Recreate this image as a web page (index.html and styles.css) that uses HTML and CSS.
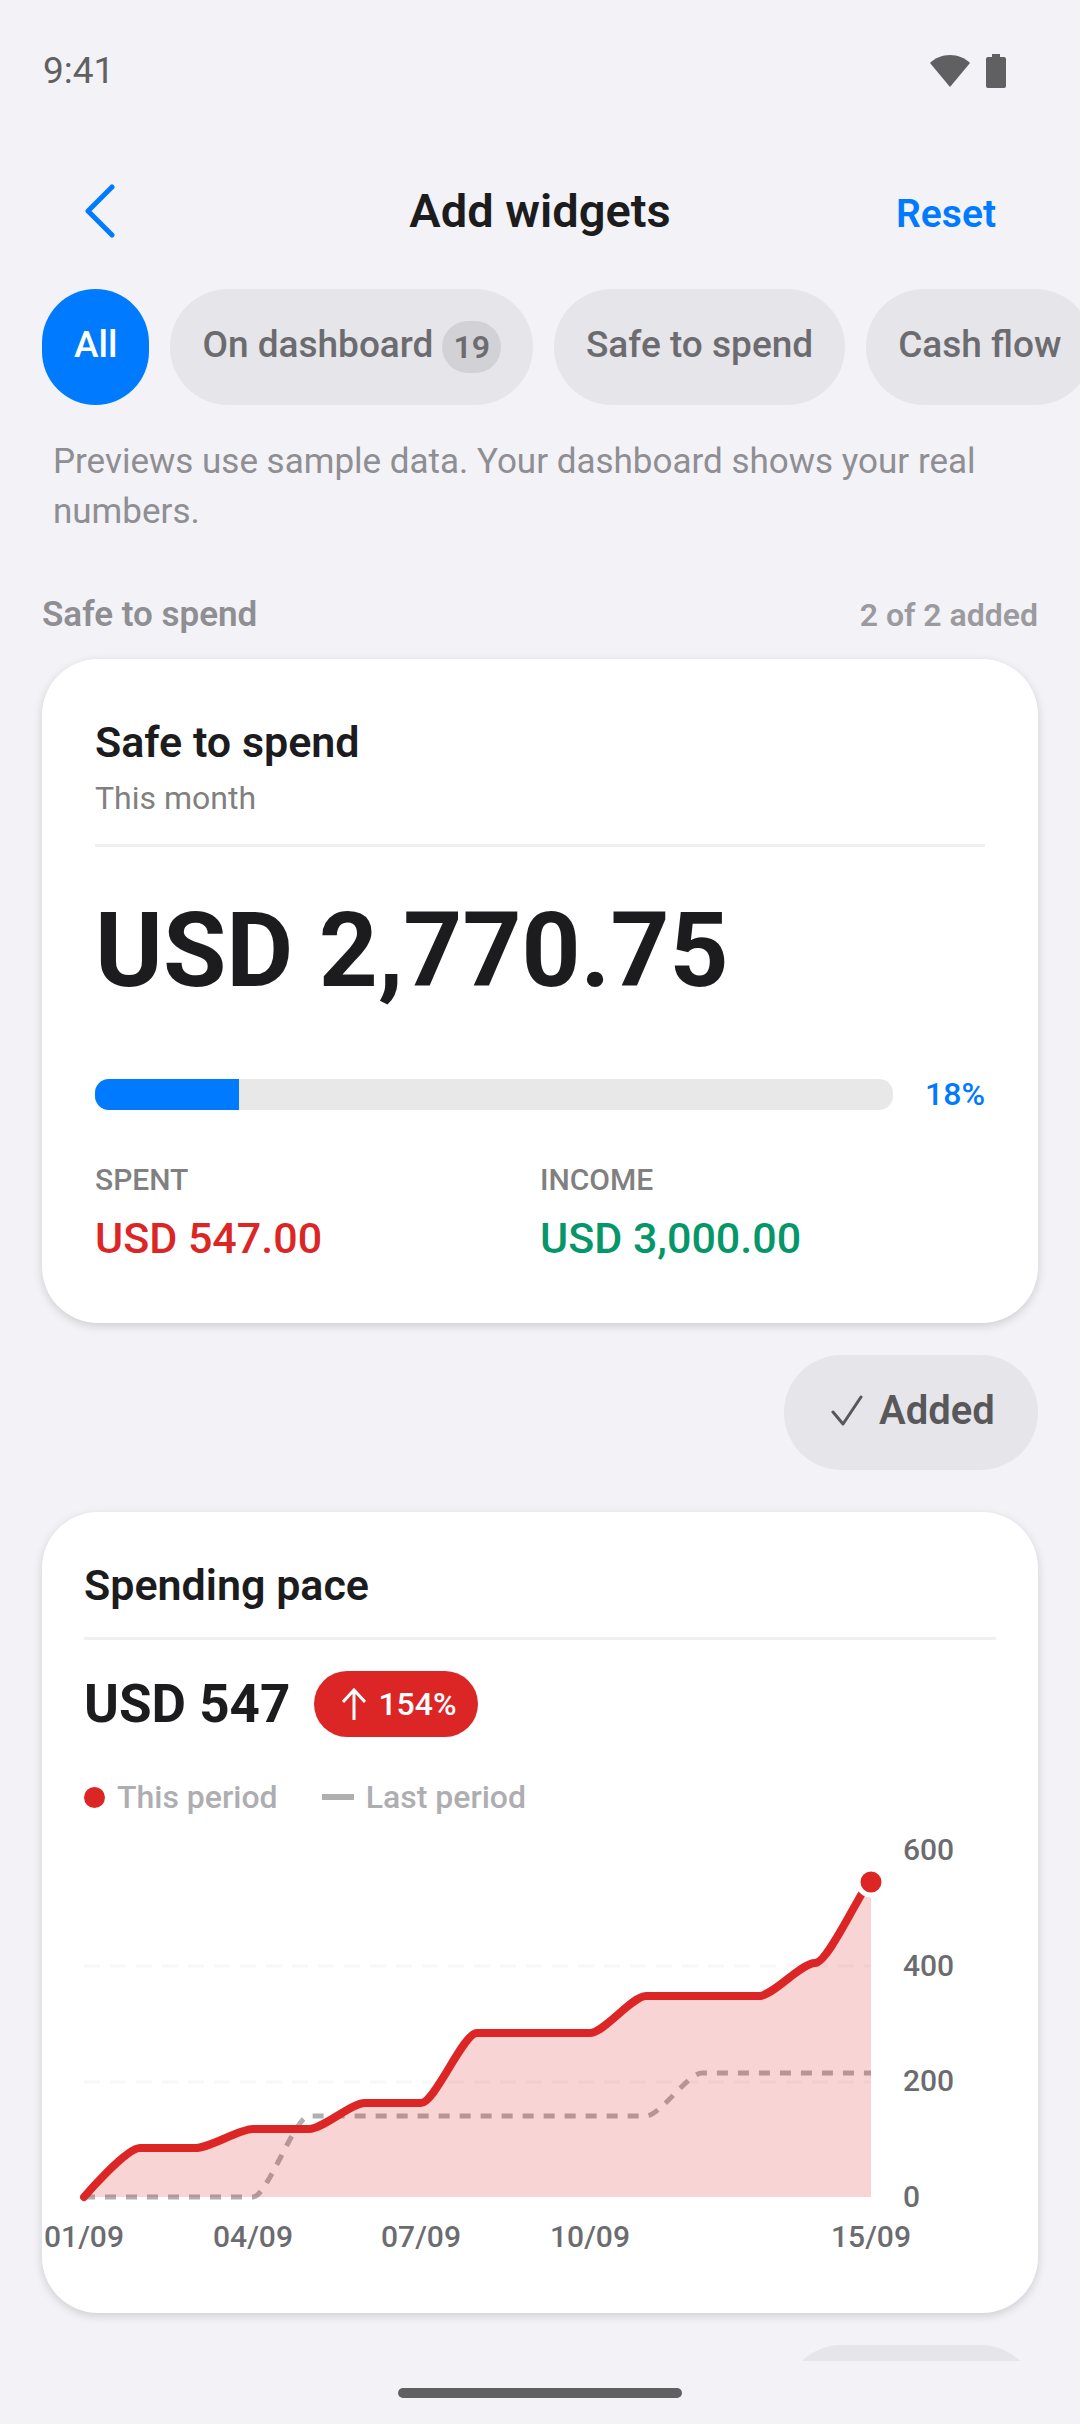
FILE: index.html
```html
<!DOCTYPE html>
<html lang="en">
<head>
<meta charset="utf-8">
<meta name="viewport" content="width=device-width, initial-scale=1">
<title>Add widgets</title>
<link rel="stylesheet" href="styles.css">
</head>
<body>
<div class="statusbar">
  <span>9:41</span>
  <span class="statusbar-icons">
    <svg width="40" height="34" viewBox="0 0 40 34" aria-hidden="true"><path d="M20 33 0 9C5 4 12 1 20 1s15 3 20 8z" fill="currentColor"/></svg>
    <svg width="20" height="34" viewBox="0 0 20 34" aria-hidden="true"><path d="M6 0h8v3h4q2 0 2 2v27q0 2-2 2H2q-2 0-2-2V5q0-2 2-2h4z" fill="currentColor"/></svg>
  </span>
</div>
<header class="topbar">
  <button class="back" type="button" aria-label="Back">
    <svg width="32" height="54" viewBox="0 0 32 54" aria-hidden="true"><path d="M28 3 4 27l24 24" fill="none" stroke="currentColor" stroke-width="5" stroke-linecap="round" stroke-linejoin="round"/></svg>
  </button>
  <h1>Add widgets</h1>
  <button class="reset" type="button">Reset</button>
</header>
<nav class="chips" aria-label="Categories">
  <button class="chip chip-active" type="button">All</button>
  <button class="chip" type="button">On dashboard <span class="count">19</span></button>
  <button class="chip" type="button">Safe to spend</button>
  <button class="chip" type="button">Cash flow</button>
</nav>
<main class="content">
  <p class="note">Previews use sample data. Your dashboard shows your real numbers.</p>
  <div class="section-head">
    <h2>Safe to spend</h2>
    <span>2 of 2 added</span>
  </div>

  <section class="card card-safe">
    <h3>Safe to spend</h3>
    <p class="period">This month</p>
    <hr>
    <p class="amount">USD 2,770.75</p>
    <div class="progress">
      <div class="track"><div class="fill" style="width: 18%"></div></div>
      <span>18%</span>
    </div>
    <dl class="totals">
      <div><dt>SPENT</dt><dd class="spent">USD 547.00</dd></div>
      <div><dt>INCOME</dt><dd class="income">USD 3,000.00</dd></div>
    </dl>
  </section>
  <button class="added" type="button">
    <svg width="32" height="32" viewBox="0 0 32 32" aria-hidden="true"><path d="M2 17l10 12L30 2" fill="none" stroke="currentColor" stroke-width="3" stroke-linecap="round" stroke-linejoin="round"/></svg>
    Added
  </button>

  <section class="card card-pace">
    <h3>Spending pace</h3>
    <hr>
    <div class="pace">
      <strong>USD 547</strong>
      <span class="trend">
        <svg width="24" height="32" viewBox="0 0 24 32" aria-hidden="true"><path d="M12 32V3M1 14 12 2l11 12" fill="none" stroke="currentColor" stroke-width="3"/></svg>
        154%
      </span>
    </div>
    <div class="legend">
      <span><i class="dot"></i>This period</span>
      <span><i class="dash"></i>Last period</span>
    </div>
    <svg class="chart" viewBox="0 0 912 424" role="img" aria-label="Spending this period compared with last period">
      <g class="grid">
        <path d="M0 136H787"/>
        <path d="M0 252H787"/>
      </g>
      <path class="last" d="M0 367H169C183 367 211 286 225 286H562C576 286 604 243 618 243H787"/>
      <path class="area" d="M0 367C0 367 42 318 56 318H112C126 318 155 299 169 299H225C239 299 267 273 281 273H337C351 273 379 203 393 203H506C520 203 548 166 562 166H675C689 166 717 133 731 133C745 133 780 52 787 52V367Z"/>
      <path class="line" d="M0 367C0 367 42 318 56 318H112C126 318 155 299 169 299H225C239 299 267 273 281 273H337C351 273 379 203 393 203H506C520 203 548 166 562 166H675C689 166 717 133 731 133C745 133 780 52 787 52"/>
      <circle class="end" cx="787" cy="52" r="13"/>
      <g class="y-labels">
        <text x="819" y="30">600</text>
        <text x="819" y="146">400</text>
        <text x="819" y="261">200</text>
        <text x="819" y="377">0</text>
      </g>
      <g class="x-labels">
        <text x="0" y="417">01/09</text>
        <text x="169" y="417">04/09</text>
        <text x="337" y="417">07/09</text>
        <text x="506" y="417">10/09</text>
        <text x="787" y="417">15/09</text>
      </g>
    </svg>
  </section>
  <button class="added" type="button" aria-label="Added"></button>
</main>
<footer class="navbar"><span class="handle"></span></footer>
</body>
</html>
```
FILE: styles.css
```css
* { box-sizing: border-box; }

body {
  margin: 0;
  height: 100vh;
  display: flex;
  flex-direction: column;
  background: #f2f2f7;
  color: #1c1c1e;
  font-family: Roboto, "Liberation Sans", sans-serif;
  font-size: 32px;
  line-height: 40px;
}

h1, h2, h3, p, dl, dd { margin: 0; }

button {
  margin: 0;
  padding: 0;
  border: 0;
  background: none;
  color: inherit;
  font: inherit;
  cursor: pointer;
}

svg { display: block; flex: none; }

.statusbar {
  flex: none;
  display: flex;
  justify-content: space-between;
  align-items: center;
  height: 142px;
  padding: 0 74px 0 43px;
  color: #606062;
  font-size: 37px;
}
.statusbar-icons { display: flex; gap: 16px; }

.topbar {
  flex: none;
  display: grid;
  grid-template-columns: 1fr auto 1fr;
  align-items: center;
  height: 138px;
  padding: 0 84px;
}
.topbar h1 { font-size: 47px; font-weight: 600; line-height: 56px; }
.back { justify-self: start; color: #007aff; }
.reset { justify-self: end; padding-top: 5px; color: #007aff; font-size: 39px; font-weight: 600; line-height: 48px; }

.chips {
  flex: none;
  display: flex;
  gap: 21px;
  padding: 9px 42px 0;
  overflow-x: auto;
  scrollbar-width: none;
}
.chip {
  flex: none;
  display: flex;
  align-items: center;
  gap: 9px;
  height: 116px;
  padding: 0 32px 4px;
  border-radius: 58px;
  background: #e5e5ea;
  color: #6c6c70;
  font-size: 37px;
  font-weight: 500;
}
.chip-active { background: #007aff; color: #fff; }
.count {
  margin-top: 4px;
  padding: 6px 11px;
  border-radius: 26px;
  background: #d1d1d6;
  font-size: 32px;
  font-weight: 600;
}

.content {
  flex: 1;
  min-height: 0;
  display: flex;
  flex-direction: column;
  padding: 0 42px;
  overflow-y: auto;
  scrollbar-width: none;
}
.content > * { flex: none; }

.note { padding: 32px 11px 0; color: #8e8e93; font-size: 35px; line-height: 50px; }

.section-head {
  display: flex;
  justify-content: space-between;
  align-items: center;
  padding: 58px 0 24px;
  color: #8e8e93;
  font-weight: 600;
}
.section-head h2 { font-size: 35px; font-weight: 600; }
.section-head span { color: #9b9b9f; }

.card {
  border-radius: 56px;
  background: #fff;
  box-shadow: 0 3px 10px rgba(0, 0, 0, 0.15);
}
.card h3 { font-size: 43px; font-weight: 600; line-height: 56px; }
.card hr { height: 3px; margin: 0; border: 0; background: #f0f0f0; }

.card-safe { padding: 55px 53px 61px; }
.period { margin: 8px 0 26px; color: #808080; }
.amount { margin: 40px 0 59px; font-size: 103px; font-weight: 700; line-height: 128px; }

.progress { display: flex; align-items: center; gap: 32px; color: #007aff; font-weight: 500; }
.track { flex: 1; height: 31px; border-radius: 14px; background: #e8e8e8; overflow: hidden; }
.fill { height: 100%; background: #007aff; }

.totals { display: grid; grid-template-columns: 1fr 1fr; margin-top: 46px; }
.totals dt { color: #808080; font-size: 30px; font-weight: 500; }
.totals dd { margin-top: 14px; font-size: 43px; font-weight: 500; line-height: 48px; }
.spent { color: #dc2626; }
.income { color: #059669; }

.added {
  align-self: flex-end;
  display: flex;
  align-items: center;
  justify-content: center;
  gap: 16px;
  min-width: 254px;
  height: 115px;
  margin: 32px 0 42px;
  padding: 0 42px 4px 46px;
  border-radius: 58px;
  background: #e5e5ea;
  color: #58585a;
  font-size: 40px;
  font-weight: 600;
}

.card-pace { padding: 45px 42px 59px; }
.card-pace h3 { margin-bottom: 24px; }
.pace { display: flex; align-items: center; gap: 24px; margin-top: 31px; }
.pace strong { font-size: 53px; font-weight: 700; line-height: 60px; }
.trend {
  display: flex;
  align-items: center;
  gap: 12px;
  height: 66px;
  padding: 0 21px 0 28px;
  border-radius: 33px;
  background: #dc2626;
  color: #fff;
  font-weight: 500;
}

.legend { display: flex; gap: 44px; margin: 40px 0 13px; color: #aeaeb2; font-weight: 500; }
.legend span { display: flex; align-items: center; gap: 12px; }
.dot { width: 21px; height: 21px; border-radius: 50%; background: #dc2626; }
.dash { width: 32px; height: 6px; background: #afafaf; }

.chart { width: 100%; overflow: visible; font-size: 30px; font-weight: 500; }
.grid { fill: none; stroke: #f8f8f8; stroke-width: 3; stroke-dasharray: 16 10; }
.last { fill: none; stroke: #afafaf; stroke-width: 5; stroke-dasharray: 11 10; }
.area { fill: #dc2626; fill-opacity: 0.2; }
.line { fill: none; stroke: #dc2626; stroke-width: 8; stroke-linecap: round; stroke-linejoin: round; }
.end { fill: #dc2626; stroke: #fff; stroke-width: 5; }
.y-labels, .x-labels { fill: #6c6c70; }
.x-labels { text-anchor: middle; }

.navbar {
  flex: none;
  display: flex;
  justify-content: center;
  align-items: center;
  height: 63px;
}
.handle { width: 284px; height: 10px; border-radius: 5px; background: #606062; }
```
